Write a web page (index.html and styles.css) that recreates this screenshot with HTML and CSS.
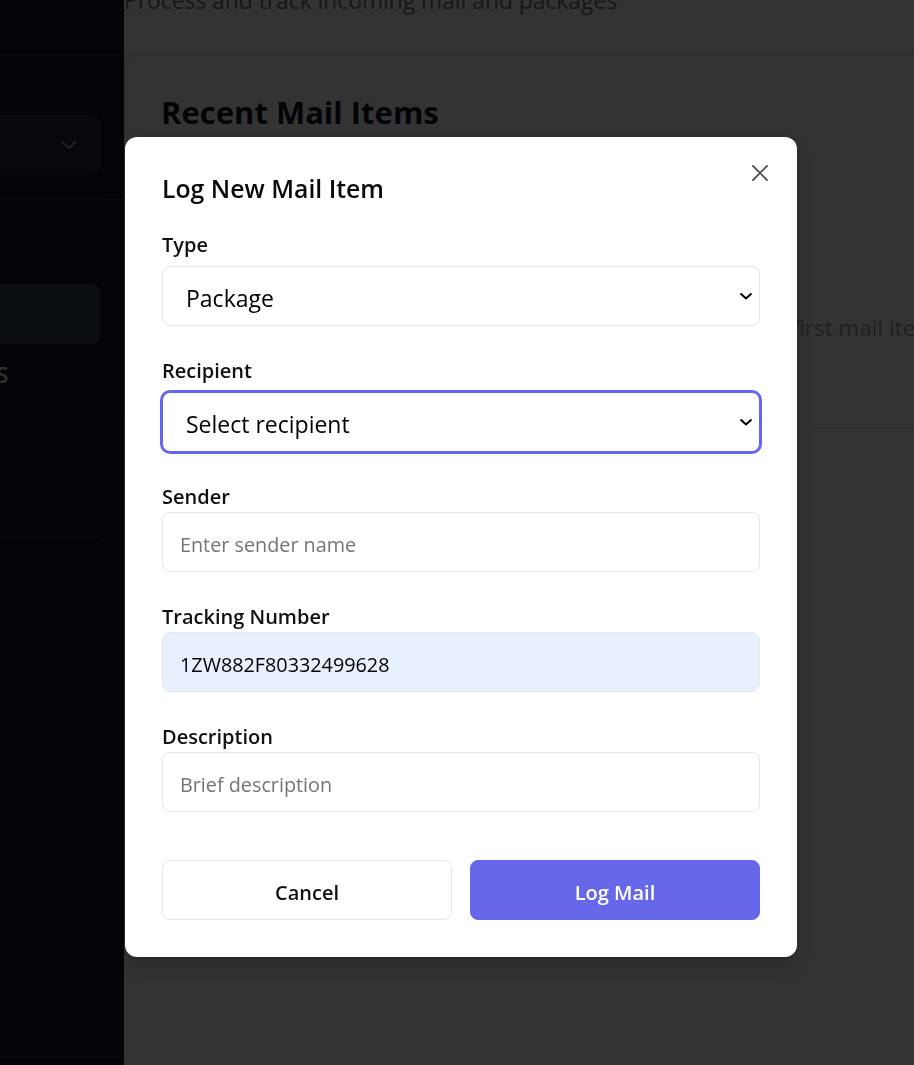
FILE: index.html
```html
<!DOCTYPE html>
<html lang="en">
<head>
<meta charset="utf-8">
<title>Mail Room</title>
<link rel="stylesheet" href="styles.css">
</head>
<body>
<div class="app">
  <aside class="sidebar">
    <div class="sidebar-inner">
      <div class="brand">MailRoom</div>
      <div class="workspace">
        <div class="ws-select">
          <span>Main Building</span>
          <svg class="ws-chev" viewBox="0 0 16 8" width="16" height="8"><polyline points="1.5,1 8,7 14.5,1" fill="none" stroke="currentColor" stroke-width="2" stroke-linecap="round" stroke-linejoin="round"/></svg>
        </div>
      </div>
      <nav class="nav">
        <a class="nav-item"><span class="nav-icon"></span><span>Home</span></a>
        <a class="nav-item active"><span class="nav-icon"></span><span>Mail Log</span></a>
        <a class="nav-item"><span class="nav-icon"></span><span>Residents</span></a>
        <a class="nav-item"><span class="nav-icon"></span><span>Reports</span></a>
        <a class="nav-item"><span class="nav-icon"></span><span>Setup</span></a>
      </nav>
      <div class="divider"></div>
      <div class="sidebar-footer"></div>
    </div>
  </aside>
  <main class="main">
    <header class="page-header">
      <h1>Mail Room</h1>
      <p>Process and track incoming mail and packages</p>
    </header>
    <section class="card">
      <div class="card-header"><h2>Recent Mail Items</h2></div>
      <p class="empty">No mail items yet. Log your first mail item to get started.</p>
    </section>
  </main>
</div>

<div class="overlay">
  <div class="modal">
    <h3 class="modal-title">Log New Mail Item</h3>
    <button class="close" aria-label="Close">
      <svg viewBox="0 0 24 24" width="28" height="28"><path d="M18 6 6 18M6 6l12 12" fill="none" stroke="currentColor" stroke-width="1.6" stroke-linecap="round"/></svg>
    </button>

    <div class="field">
      <label class="label">Type</label>
      <div class="select-wrap">
        <select class="select">
          <option>Letter</option>
          <option selected>Package</option>
          <option>Envelope</option>
        </select>
        <svg class="chev" viewBox="0 0 14 8" width="14" height="8"><polyline points="1.5,1.5 7,6.5 12.5,1.5" fill="none" stroke="#000" stroke-width="2"/></svg>
      </div>
    </div>

    <div class="field">
      <label class="label">Recipient</label>
      <div class="select-wrap">
        <select class="select focus">
          <option selected>Select recipient</option>
        </select>
        <svg class="chev" viewBox="0 0 14 8" width="14" height="8"><polyline points="1.5,1.5 7,6.5 12.5,1.5" fill="none" stroke="#000" stroke-width="2"/></svg>
      </div>
    </div>

    <div class="field">
      <label class="label">Sender</label>
      <input class="input" type="text" placeholder="Enter sender name">
    </div>

    <div class="field">
      <label class="label">Tracking Number</label>
      <input class="input autofill" type="text" value="1ZW882F80332499628">
    </div>

    <div class="field field-last">
      <label class="label">Description</label>
      <input class="input" type="text" placeholder="Brief description">
    </div>

    <div class="actions">
      <button class="btn btn-secondary">Cancel</button>
      <button class="btn btn-primary">Log Mail</button>
    </div>
  </div>
</div>
</body>
</html>
```

FILE: styles.css
```css
* { box-sizing: border-box; }

html, body {
  margin: 0;
  height: 100%;
}

body {
  font-family: "Open Sans", "Noto Sans", sans-serif;
  background: #ffffff;
  overflow: hidden;
}

.app {
  display: flex;
  height: 100vh;
}

/* Sidebar (partially slid off-screen) */
.sidebar {
  flex: 0 0 124px;
  background: #0f172a;
  overflow: hidden;
  display: flex;
  justify-content: flex-end;
}

.sidebar-inner {
  flex: 0 0 307px;
  display: flex;
  flex-direction: column;
}

.brand {
  height: 55px;
  border-bottom: 1px solid #334155;
  display: flex;
  align-items: center;
  padding: 0 24px;
  color: #ffffff;
  font-size: 22px;
  font-weight: 700;
}

.workspace {
  padding: 60px 24px 25px;
  border-bottom: 1px solid #334155;
}

.ws-select {
  height: 59px;
  border: 1px solid #334155;
  background: #1e293b;
  border-radius: 8px;
  display: flex;
  align-items: center;
  justify-content: space-between;
  padding: 0 22px 0 16px;
  color: #e2e8f0;
  font-size: 20px;
}

.ws-chev { color: #94a3b8; }

.nav {
  padding: 24px 24px 12px;
  display: flex;
  flex-direction: column;
}

.nav-item {
  height: 60px;
  display: flex;
  align-items: center;
  gap: 12px;
  padding: 0 16px;
  border-radius: 8px;
  color: #f1f5f9;
  font-size: 22px;
  font-weight: 600;
  text-transform: uppercase;
  white-space: nowrap;
}

.nav-item.active { background: #3f4a5c; }

.nav-icon {
  width: 24px;
  height: 24px;
  flex: 0 0 24px;
  border-radius: 6px;
  background: #334155;
}

.divider {
  margin: 0 24px;
  border-top: 1px solid #334155;
}

.sidebar-footer {
  margin-top: auto;
  height: 8px;
  border-top: 1px solid #334155;
}

/* Main */
.main {
  flex: 0 0 1341px;
  display: flex;
  flex-direction: column;
}

.page-header {
  height: 54px;
  flex-shrink: 0;
  display: flex;
  flex-direction: column;
  justify-content: flex-end;
  padding-bottom: 37px;
  overflow: hidden;
}

.page-header h1 {
  margin: 0 0 4px;
  font-size: 30px;
  color: #111827;
}

.page-header p {
  margin: 0;
  font-size: 22.8px;
  line-height: 32px;
  color: #6b7280;
}

.card {
  border: 1px solid #e5e7eb;
  border-radius: 12px;
  background: #ffffff;
}

.card-header { padding: 37px 36px 0; }

.card-header h2 {
  margin: 0;
  font-size: 31px;
  line-height: 40px;
  font-weight: 700;
  color: #111827;
}

.empty {
  margin: 0;
  padding: 180px 36px 83px;
  text-align: center;
  font-size: 22.5px;
  line-height: 32px;
  color: #9ca3af;
}

/* Modal */
.overlay {
  position: fixed;
  inset: 0;
  background: rgba(0, 0, 0, 0.8);
  display: flex;
  justify-content: center;
  align-items: flex-start;
  padding: 137px 0 0 8px;
}

.modal {
  position: relative;
  width: 672px;
  background: #ffffff;
  border-radius: 12px;
  padding: 35px 37px 37px;
  box-shadow: 0 1px 3px rgba(0, 0, 0, 0.3), 0 10px 25px rgba(0, 0, 0, 0.2);
}

.modal-title {
  margin: 0 0 27px;
  font-size: 24.8px;
  line-height: 32px;
  font-weight: 600;
  color: #0a0a0a;
}

.close {
  position: absolute;
  top: 22px;
  right: 23px;
  width: 28px;
  height: 28px;
  padding: 0;
  border: 0;
  background: none;
  color: #555555;
  display: flex;
}

.field {
  display: flex;
  flex-direction: column;
  margin-bottom: 31px;
}

.field-last { margin-bottom: 48px; }

.label {
  font-size: 20px;
  line-height: 28px;
  font-weight: 600;
  color: #111111;
  margin-bottom: 1px;
}

.select-wrap {
  display: grid;
  margin-top: 6px;
}

.select-wrap > * { grid-area: 1 / 1; }

.select {
  appearance: none;
  -webkit-appearance: none;
  width: 100%;
  height: 60px;
  border: 1px solid #e5e7eb;
  border-radius: 8px;
  background: #ffffff;
  font-family: inherit;
  font-size: 23px;
  color: #000000;
  padding: 4px 40px 0 23px;
  margin: 0;
}

.select.focus {
  border-color: #6366f1;
  box-shadow: 0 0 0 2px #6366f1;
  outline: none;
}

.chev {
  justify-self: end;
  align-self: center;
  margin-right: 7px;
  pointer-events: none;
}

.input {
  width: 100%;
  height: 60px;
  border: 1px solid #e5e7eb;
  border-radius: 8px;
  background: #ffffff;
  font-family: inherit;
  font-size: 19.8px;
  color: #000000;
  padding: 5px 17px 0;
  margin: 0;
}

.input::placeholder { color: #757575; }

.input.autofill {
  background: #e8f0fe;
  border-color: #e3e8f0;
}

.actions {
  display: flex;
  gap: 18px;
}

.btn {
  flex: 1;
  height: 60px;
  border-radius: 8px;
  font-family: inherit;
  font-size: 20px;
  font-weight: 600;
  padding: 4px 0 0;
  cursor: pointer;
}

.btn-secondary {
  background: #ffffff;
  border: 1px solid #e5e7eb;
  color: #111111;
}

.btn-primary {
  background: #6767e9;
  border: 1px solid #6767e9;
  color: #ffffff;
}
```
